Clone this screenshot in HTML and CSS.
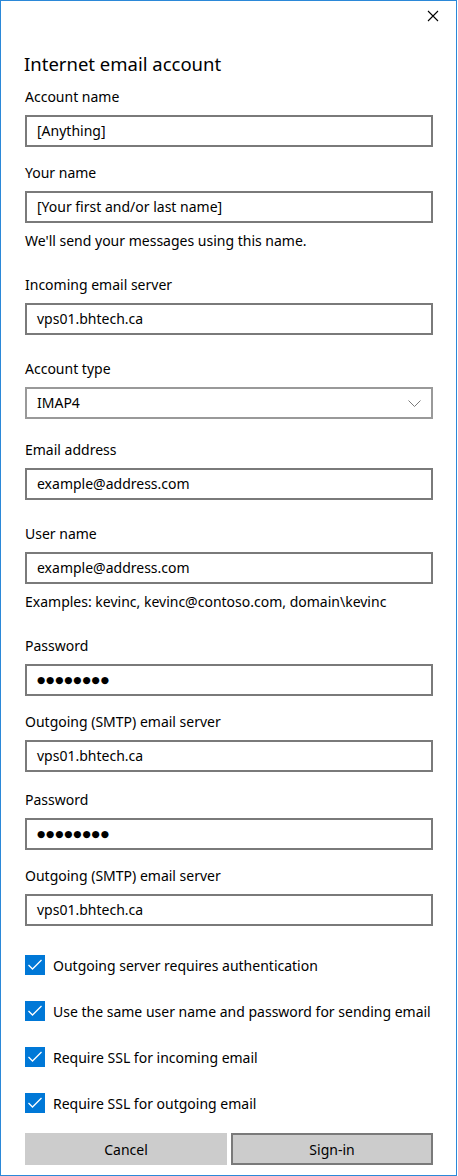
FILE: index.html
```html
<!DOCTYPE html>
<html lang="en">
<head>
<meta charset="utf-8">
<title>Internet email account</title>
<link rel="stylesheet" href="styles.css">
</head>
<body>
<div class="window">
  <div class="titlebar">
    <button class="close" aria-label="Close">
      <svg width="12" height="12" viewBox="0 0 12 12"><path d="M1 1 L11 11 M11 1 L1 11" stroke="#000" stroke-width="1.1" fill="none"/></svg>
    </button>
  </div>
  <div class="content">
    <h1 class="title">Internet email account</h1>

    <div class="field f-first">
      <div class="label">Account name</div>
      <div class="box">[Anything]</div>
    </div>

    <div class="field f-16">
      <div class="label">Your name</div>
      <div class="box">[Your first and/or last name]</div>
      <div class="help">We'll send your messages using this name.</div>
    </div>

    <div class="field f-24">
      <div class="label">Incoming email server</div>
      <div class="box">vps01.bhtech.ca</div>
    </div>

    <div class="field f-24">
      <div class="label">Account type</div>
      <div class="box select">
        <span>IMAP4</span>
        <svg class="chev" width="13" height="7" viewBox="0 0 13 7"><path d="M0.5 0.5 L6.5 6.5 L12.5 0.5" stroke="#7a7a7a" stroke-width="1" fill="none"/></svg>
      </div>
    </div>

    <div class="field f-21">
      <div class="label">Email address</div>
      <div class="box">example@address.com</div>
    </div>

    <div class="field f-24">
      <div class="label">User name</div>
      <div class="box">example@address.com</div>
      <div class="help">Examples: kevinc, kevinc@contoso.com, domain\kevinc</div>
    </div>

    <div class="field f-24">
      <div class="label">Password</div>
      <div class="box dots">●●●●●●●●</div>
    </div>

    <div class="field f-16">
      <div class="label">Outgoing (SMTP) email server</div>
      <div class="box">vps01.bhtech.ca</div>
    </div>

    <div class="field f-18">
      <div class="label">Password</div>
      <div class="box dots">●●●●●●●●</div>
    </div>

    <div class="field f-16">
      <div class="label">Outgoing (SMTP) email server</div>
      <div class="box">vps01.bhtech.ca</div>
    </div>

    <div class="checks">
      <div class="check"><span class="cb"><svg width="20" height="20" viewBox="0 0 20 20"><path d="M3.5 10 L7.5 14 L16.5 5" stroke="#fff" stroke-width="1.3" fill="none"/></svg></span>Outgoing server requires authentication</div>
      <div class="check"><span class="cb"><svg width="20" height="20" viewBox="0 0 20 20"><path d="M3.5 10 L7.5 14 L16.5 5" stroke="#fff" stroke-width="1.3" fill="none"/></svg></span>Use the same user name and password for sending email</div>
      <div class="check"><span class="cb"><svg width="20" height="20" viewBox="0 0 20 20"><path d="M3.5 10 L7.5 14 L16.5 5" stroke="#fff" stroke-width="1.3" fill="none"/></svg></span>Require SSL for incoming email</div>
      <div class="check"><span class="cb"><svg width="20" height="20" viewBox="0 0 20 20"><path d="M3.5 10 L7.5 14 L16.5 5" stroke="#fff" stroke-width="1.3" fill="none"/></svg></span>Require SSL for outgoing email</div>
    </div>

    <div class="buttons">
      <button class="btn">Cancel</button>
      <button class="btn primary">Sign-in</button>
    </div>
  </div>
</div>
</body>
</html>
```
FILE: styles.css
```css
html, body {
  margin: 0;
  padding: 0;
  background: #fff;
}
body {
  font-family: "Noto Sans", "Open Sans", sans-serif;
  font-size: 14px;
  color: #000;
}
.window {
  width: 457px;
  height: 1176px;
  box-sizing: border-box;
  border: 1px solid #2b88d8;
  background: #fff;
}
.titlebar {
  height: 32px;
  display: flex;
  justify-content: flex-end;
}
.close {
  width: 46px;
  height: 32px;
  border: 0;
  background: transparent;
  padding: 0;
  display: flex;
  align-items: center;
  justify-content: center;
  margin-top: -1px;
}
.content {
  padding: 0 23px 0 24px;
}
.title {
  margin: 17px 0 0 -1px;
  font-size: 18.5px;
  font-weight: 400;
  line-height: 28px;
}
.field { display: flex; flex-direction: column; }
.f-first { margin-top: 9px; }
.f-16 { margin-top: 16px; }
.f-18 { margin-top: 18px; }
.f-21 { margin-top: 21px; }
.f-24 { margin-top: 24px; }
.label {
  line-height: 20px;
  margin-bottom: 8px;
}
.box {
  height: 32px;
  box-sizing: border-box;
  border: 2px solid #7a7a7a;
  padding: 0 10px;
  display: flex;
  align-items: center;
  line-height: 20px;
}
.select {
  border-color: #999;
  justify-content: space-between;
}
.dots {
  font-family: "DejaVu Sans", sans-serif;
  font-size: 9.5px;
  letter-spacing: 0.8px;
}
.help {
  line-height: 20px;
  margin-top: 8px;
}
.checks {
  margin-top: 29px;
  display: flex;
  flex-direction: column;
  gap: 26px;
}
.check {
  display: flex;
  align-items: center;
  height: 20px;
  gap: 8px;
  white-space: nowrap;
}
.cb {
  width: 20px;
  height: 20px;
  background: #0078d7;
  flex: none;
  display: flex;
}
.buttons {
  margin-top: 20px;
  display: grid;
  grid-template-columns: 1fr 1fr;
  gap: 4px;
}
.btn {
  height: 32px;
  box-sizing: border-box;
  border: 2px solid #ccc;
  background: #ccc;
  font-family: inherit;
  font-size: 14px;
  color: #000;
  padding: 0;
}
.btn.primary {
  border-color: #7a7a7a;
}
```
